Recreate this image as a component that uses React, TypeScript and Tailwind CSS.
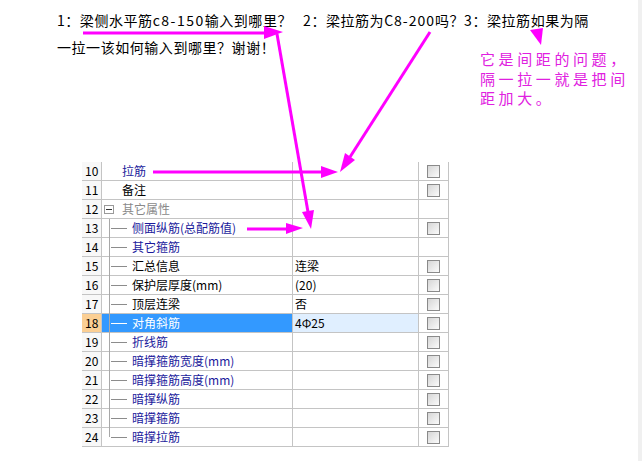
import React from "react";

type Row = {
  n: number;
  label: string;
  color: "blue" | "black" | "gray" | "sel";
  level: 0 | 1;
  group?: boolean;
  value?: string;
  check: boolean;
};

const rows: Row[] = [
  { n: 10, label: "拉筋", color: "blue", level: 0, check: true },
  { n: 11, label: "备注", color: "black", level: 0, check: true },
  { n: 12, label: "其它属性", color: "gray", level: 0, group: true, check: false },
  { n: 13, label: "侧面纵筋(总配筋值)", color: "blue", level: 1, check: true },
  { n: 14, label: "其它箍筋", color: "blue", level: 1, check: false },
  { n: 15, label: "汇总信息", color: "black", level: 1, value: "连梁", check: true },
  { n: 16, label: "保护层厚度(mm)", color: "black", level: 1, value: "(20)", check: true },
  { n: 17, label: "顶层连梁", color: "black", level: 1, value: "否", check: true },
  { n: 18, label: "对角斜筋", color: "sel", level: 1, value: "4Φ25", check: true },
  { n: 19, label: "折线筋", color: "blue", level: 1, check: true },
  { n: 20, label: "暗撑箍筋宽度(mm)", color: "blue", level: 1, check: true },
  { n: 21, label: "暗撑箍筋高度(mm)", color: "blue", level: 1, check: true },
  { n: 22, label: "暗撑纵筋", color: "blue", level: 1, check: true },
  { n: 23, label: "暗撑箍筋", color: "blue", level: 1, check: true },
  { n: 24, label: "暗撑拉筋", color: "blue", level: 1, check: true },
];

const font = { fontFamily: '"Noto Sans CJK SC", "Noto Sans", sans-serif' };

function CheckBox() {
  return (
    <div className="w-[13px] h-[13px] border border-[#8a8a8a] bg-gradient-to-br from-[#d6d6d6] to-[#fbfbfb]" />
  );
}

function TableRow({ r, last }: { r: Row; last: boolean }) {
  const sel = r.color === "sel";
  const textColor =
    r.color === "blue"
      ? "text-[#1a1a9c]"
      : r.color === "gray"
      ? "text-[#8a8a8a]"
      : r.color === "sel"
      ? "text-white"
      : "text-black";
  return (
    <div className="flex h-[19px] border-b border-[#c4c4c4]">
      <div
        className={`w-[20px] shrink-0 border-r border-[#c4c4c4] pl-[3px] text-[12px] leading-[18px] text-black ${
          sel ? "bg-[#fbcf94]" : "bg-[#f8f8f8]"
        }`}
      >
        {r.n}
      </div>
      <div
        className={`relative w-[191px] shrink-0 border-r border-[#c4c4c4] flex items-center text-[12px] leading-[18px] ${
          sel ? "bg-[#3399ff]" : "bg-white"
        } ${textColor}`}
      >
        {r.group && (
          <div className="absolute left-[2px] top-[5px] w-[10px] h-[9px] border border-[#9a9a9a] bg-white flex items-center justify-center">
            <div className="w-[6px] h-px bg-[#333]" />
          </div>
        )}
        {r.level === 1 && (
          <>
            <div
              className={`absolute left-[7px] top-0 w-px ${last ? "h-[9px]" : "h-[19px]"} bg-[#a8a8a8]`}
            />
            <div
              className={`absolute left-[9px] top-[9px] w-[16px] h-px ${
                sel ? "bg-white" : "bg-[#8c8c8c]"
              }`}
            />
          </>
        )}
        <span className={r.level === 1 ? "pl-[30px]" : "pl-[20px]"}>{r.label}</span>
      </div>
      <div
        className={`w-[126px] shrink-0 border-r border-[#c4c4c4] pl-[2px] text-[12px] leading-[18px] text-black ${
          sel ? "bg-[#e0efff]" : "bg-white"
        }`}
      >
        {r.value ?? ""}
      </div>
      <div className="w-[30px] shrink-0 border-r border-[#c4c4c4] flex items-center justify-center bg-white">
        {r.check && <CheckBox />}
      </div>
    </div>
  );
}

export default function App() {
  return (
    <div className="relative w-[642px] h-[461px] bg-white overflow-hidden flex" style={font}>
      <div className="flex-1 flex flex-col">
        <div className="pl-[57px] pt-[7px] text-[14px] leading-[27px] text-black whitespace-nowrap tracking-[0.55px]">
          <div>
            1：梁侧水平筋<span className="tracking-[1.5px]">c8-150</span>输入到哪里？&nbsp;&nbsp;&nbsp;2：梁拉筋为
            <span className="tracking-[1px]">C8-200</span>吗？3：梁拉筋如果为隔
          </div>
          <div>一拉一该如何输入到哪里？谢谢！</div>
        </div>
        <div className="ml-[82px] mt-[101px] w-[367px] flex flex-col">
          {rows.map((r, i) => (
            <TableRow key={r.n} r={r} last={i === rows.length - 1} />
          ))}
        </div>
      </div>
      <div className="w-[4px] bg-[#f0f0f0]" />

      <div className="absolute left-[480px] top-[49px] text-[15px] leading-[19.5px] tracking-[3.6px] text-[#e020e0]">
        <div>它是间距的问题，</div>
        <div>隔一拉一就是把间</div>
        <div>距加大。</div>
      </div>

      <svg className="absolute left-0 top-0 pointer-events-none" width="642" height="461">
        <g stroke="#ff00ff" strokeWidth="3" fill="none">
          <line x1="83" y1="33" x2="268" y2="33" />
          <line x1="277" y1="34" x2="308" y2="212" />
          <line x1="430" y1="32" x2="350" y2="157" />
          <line x1="153" y1="172" x2="323" y2="172" />
          <line x1="247" y1="229" x2="288" y2="229" />
        </g>
        <g fill="#ff00ff">
          <polygon points="283,32 264,26 264,39" />
          <polygon points="311,229 314,210 302,212" />
          <polygon points="340,172 355,160 345,153" />
          <polygon points="338,172 321,166 321,178" />
          <polygon points="303,228 286,223 286,234" />
          <polygon points="530,30 543,28 541,45" />
        </g>
      </svg>
    </div>
  );
}
